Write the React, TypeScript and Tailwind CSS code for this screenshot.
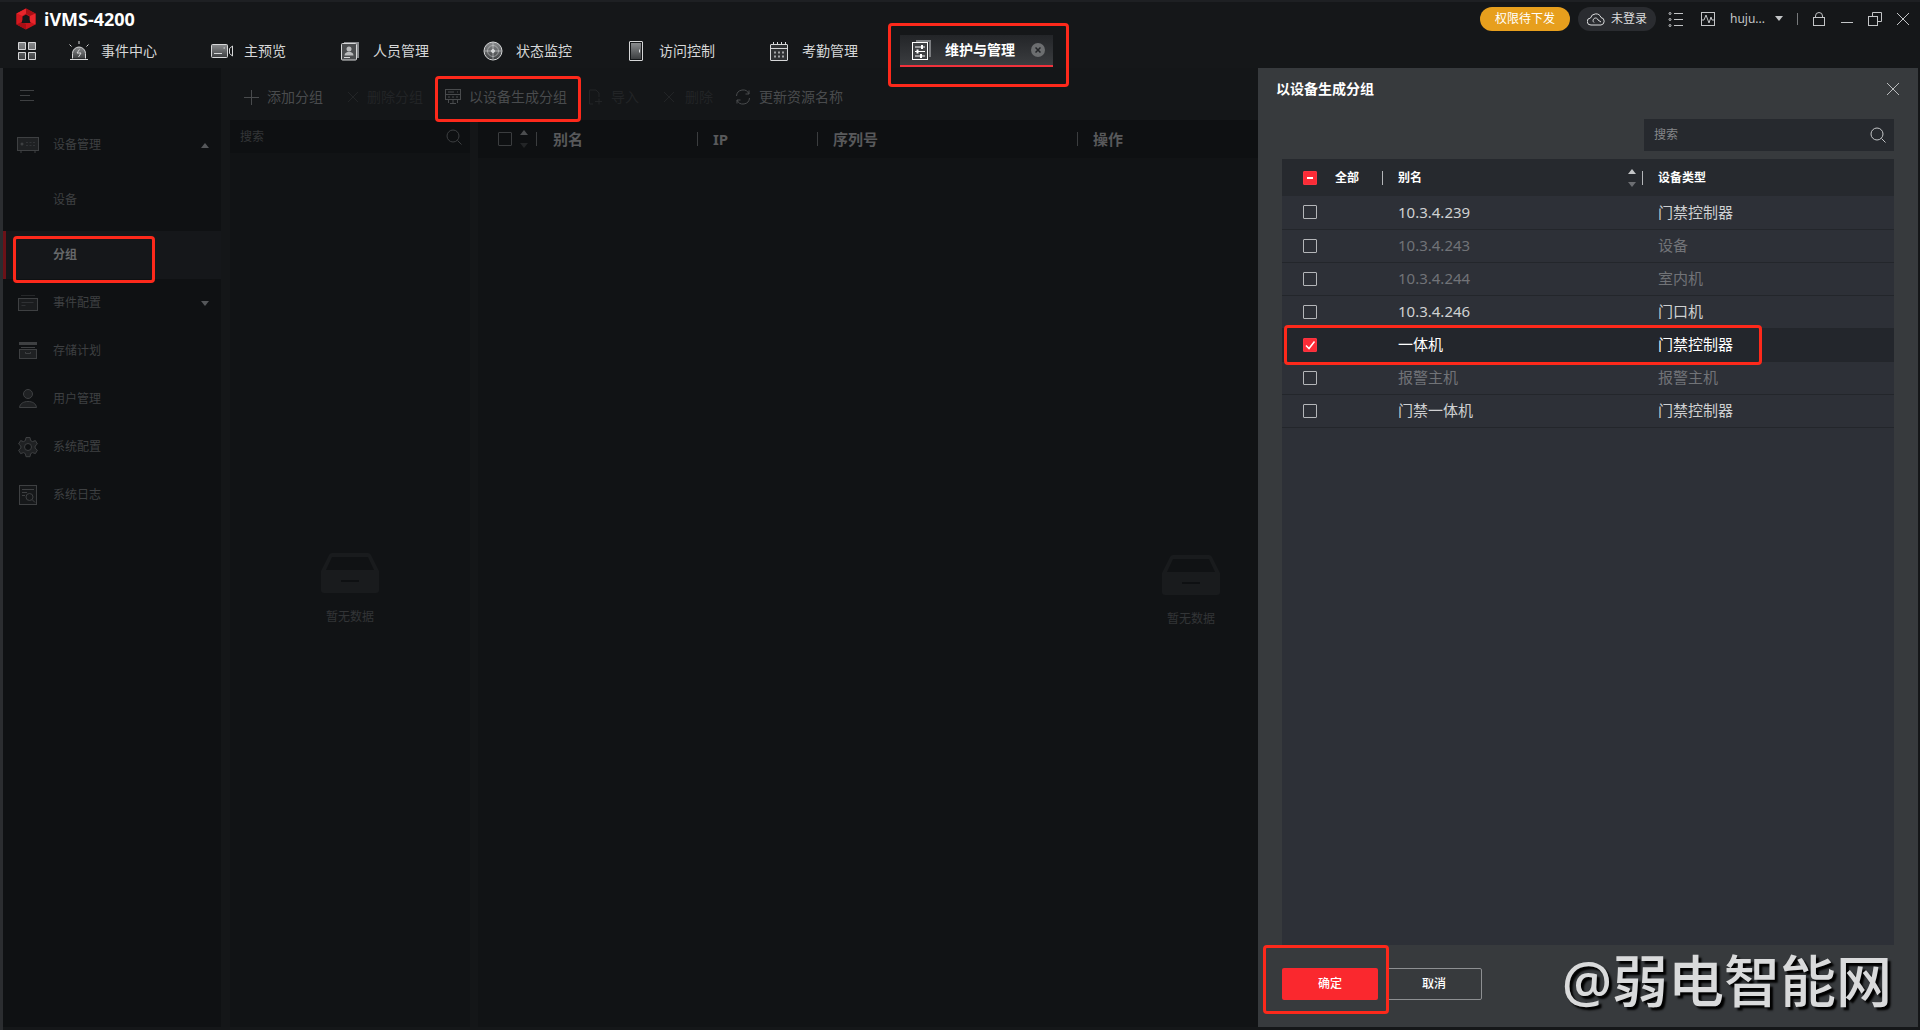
import { useState } from "react";
import type { ReactNode } from "react";
import clsx from "clsx";

type IconProps = { className?: string };

type Device = {
  name: string;
  type: string;
  disabled?: boolean;
};

const DEVICES: Device[] = [
  { name: "10.3.4.239", type: "门禁控制器" },
  { name: "10.3.4.243", type: "设备", disabled: true },
  { name: "10.3.4.244", type: "室内机", disabled: true },
  { name: "10.3.4.246", type: "门口机" },
  { name: "一体机", type: "门禁控制器" },
  { name: "报警主机", type: "报警主机", disabled: true },
  { name: "门禁一体机", type: "门禁控制器" },
];

// shared gradient for the filled parts of the tab icons
function IconDefs() {
  return (
    <svg className="absolute size-0" aria-hidden="true">
      <defs>
        <linearGradient id="metal" x1="0" y1="0" x2="0" y2="1">
          <stop offset="0" stopColor="#8a8c8e" />
          <stop offset="1" stopColor="#3c3e40" />
        </linearGradient>
      </defs>
    </svg>
  );
}

function Svg({ className, size = 20, children }: IconProps & { size?: number; children: ReactNode }) {
  return (
    <svg
      className={clsx("shrink-0", className)}
      width={size}
      height={size}
      viewBox={`0 0 ${size} ${size}`}
      fill="none"
      stroke="currentColor"
      aria-hidden="true"
    >
      {children}
    </svg>
  );
}

function Logo() {
  return (
    <svg width="20" height="22" viewBox="0 0 20 22" aria-hidden="true">
      <path d="M10 .5 19.5 5.5v11L10 21.500.5 16.500v-11z" fill="#c8141b" />
      <path d="M10 .5.5 5.500 6 8l4-2.500z" fill="#e8262c" />
      <path d="M10 .5 19.500 5.500 14 8l-4-2.500z" fill="#a80f15" />
      <path d="M.5 5.500v11L6 14V8z" fill="#d3181f" />
      <path d="M19.500 5.500v11L14 14V8z" fill="#e8262c" />
      <path d="M.5 16.500 10 21.500V16l-4-2z" fill="#a80f15" />
      <path d="M10 6.500 13.500 8.500v3l1 3.500h-9l1-3.500v-3z" fill="#151719" />
    </svg>
  );
}

const AlarmIcon = () => (
  <Svg size={22}>
    <path d="M4.500 18.500v-5a6.500 6.500 0 0 1 13 0v5" fill="url(#metal)" />
    <path d="M2 19.500h18M11 1v3M1.500 4.500l2 2M20.500 4.500l-2 2" />
    <path d="m11.500 9.500-2.500 3.500h4l-2.500 4" />
  </Svg>
);

const CameraIcon = () => (
  <Svg size={22}>
    <rect x=".5" y="4.500" width="16" height="13" rx="1" fill="url(#metal)" />
    <path d="M18.500 8.500v5l3 2.500V6z" />
    <path d="M3 13.500h8M12.500 8h1.500" />
  </Svg>
);

const PersonCardIcon = () => (
  <Svg>
    <path d="M4 1h15v16h-2V3H4z" fill="#85878a" stroke="none" />
    <rect x="1.500" y="2.500" width="15" height="16.500" rx="1" fill="#4b4d4f" />
    <circle cx="9" cy="8" r="2.500" fill="#b9babb" stroke="none" />
    <path d="M4.500 14.500c0-5 9-5 9 0z" fill="#b9babb" stroke="none" />
    <path d="M4 16.500h6" />
  </Svg>
);

const RadarIcon = () => (
  <Svg>
    <circle cx="10" cy="10" r="9" fill="url(#metal)" />
    <circle cx="10" cy="10" r="5.500" strokeOpacity=".5" />
    <circle cx="10" cy="10" r="1.500" fill="currentColor" />
    <path d="M10 2v16M2 10h16" strokeOpacity=".6" />
  </Svg>
);

const DoorIcon = () => (
  <Svg>
    <rect x="3.500" y=".5" width="13" height="19" rx=".5" />
    <rect x="5" y="2" width="10" height="16" fill="url(#metal)" stroke="none" />
    <path d="M13.500 8.500v3" />
  </Svg>
);

const CalendarIcon = () => (
  <Svg>
    <rect x="1.500" y="3.500" width="17" height="16" rx=".5" fill="#2f3133" />
    <path d="M1.500 7.500h17M4.500 1v3M8.500 1v3M12.500 1v3M16.500 1v3" />
    <path d="M5 11.500h11M5 15.500h11" strokeWidth="2" strokeDasharray="2 2" strokeOpacity=".7" />
  </Svg>
);

const SettingsIcon = () => (
  <Svg>
    <path d="M4 0h15v17h-2V2H4z" fill="#7b7d80" stroke="none" />
    <rect x=".5" y="2.500" width="15" height="17" fill="#3f4144" />
    <path d="M3 7h10M3 11.500h10M3 16h10" />
    <path d="M10 5v4M5.500 9.500v4M9 14v4" strokeWidth="2" />
  </Svg>
);

const TABS = [
  { label: "事件中心", icon: <AlarmIcon /> },
  { label: "主预览", icon: <CameraIcon /> },
  { label: "人员管理", icon: <PersonCardIcon /> },
  { label: "状态监控", icon: <RadarIcon /> },
  { label: "访问控制", icon: <DoorIcon /> },
  { label: "考勤管理", icon: <CalendarIcon /> },
];

const DeviceIcon = () => (
  <Svg size={22}>
    <rect x=".5" y="3.500" width="21" height="13" fill="#1f2123" />
    <circle cx="5" cy="10" r="1.500" fill="currentColor" stroke="none" />
    <path d="M9 8.500h9M9 11.500h9" strokeDasharray="2 1.500" strokeOpacity=".6" />
    <path d="M4 17v2M18 17v2" />
  </Svg>
);

const EventIcon = () => (
  <Svg size={22}>
    <path d="M4 3.500h14" strokeOpacity=".5" />
    <rect x="1.500" y="6.500" width="19" height="12" fill="#1a1c1e" />
    <path d="M4.500 10.500h12M4.500 13.500h4" strokeOpacity=".6" />
  </Svg>
);

const StorageIcon = () => (
  <Svg size={22}>
    <rect x="2" y="2" width="18" height="3" fill="currentColor" stroke="none" />
    <path d="M4 7.500h14" />
    <rect x="2.500" y="9.500" width="17" height="9" fill="#1f2123" />
    <path d="M8.500 12v1.500h5V12" />
  </Svg>
);

const UserIcon = () => (
  <Svg size={22}>
    <circle cx="11" cy="6" r="4.500" fill="#1f2123" />
    <path d="M2.500 19.500c.5-4 4-6 8.500-6s8 2 8.500 6z" fill="#1f2123" />
  </Svg>
);

const GearIcon = () => (
  <Svg size={22}>
    <path
      d="M9 1.500h4l.6 3 1.900 1.100 2.900-1 2 3.400-2.300 2v2.200l2.300 2-2 3.400-2.900-1-1.900 1.100-.6 3H9l-.6-3-1.900-1.100-2.900 1-2-3.400 2.300-2V10l-2.300-2 2-3.400 2.900 1 1.900-1.100z"
      fill="#1f2123"
    />
    <circle cx="11" cy="11" r="3.500" fill="#0f1113" />
  </Svg>
);

const LogIcon = () => (
  <Svg size={22}>
    <rect x="2.500" y="1.500" width="17" height="19" fill="#16181a" />
    <path d="M5 5.500h12M5 8.500h5M5 11.500h3" />
    <circle cx="12.500" cy="13" r="3.500" />
    <path d="m15 15.500 3 3" />
  </Svg>
);

const CloseIcon = ({ className }: IconProps) => (
  <Svg size={14} className={className}>
    <path d="m1 1 12 12M13 1 1 13" />
  </Svg>
);

const SearchIcon = ({ className }: IconProps) => (
  <Svg size={16} className={className}>
    <circle cx="7" cy="7" r="6" />
    <path d="m11.500 11.500 4 4" />
  </Svg>
);

const PlusIcon = () => (
  <Svg size={16}>
    <path d="M8.500 1v15M1 8.500h15" />
  </Svg>
);

const SmallCross = () => (
  <Svg size={12}>
    <path d="m1 1 10 10M11 1 1 11" />
  </Svg>
);

const ServerIcon = () => (
  <Svg size={16}>
    <rect x=".5" y=".5" width="15" height="5" />
    <rect x=".5" y="5.500" width="15" height="5" />
    <path d="M3 3h6M12 3h1M3 8h2M7 8h2M11 8h2M3.500 11v3M8 11v4M12.500 11v3M5 14.500h6" />
  </Svg>
);

const ImportIcon = () => (
  <Svg size={16}>
    <path d="M6 15H2.500V1H9l3 3v4" />
    <path d="M8 12.500h7M12 9.500v6" />
  </Svg>
);

const RefreshIcon = () => (
  <Svg size={16}>
    <path d="M1.500 7A6.500 6.500 0 0 1 14 5V1.500M14 5h-3.500M14.500 9A6.500 6.500 0 0 1 2 11v3.500M2 11h3.500" />
  </Svg>
);

function Caret({ up, className }: { up?: boolean; className?: string }) {
  return (
    <svg className={clsx("shrink-0", className)} width="8" height="5" viewBox="0 0 8 5" fill="currentColor" aria-hidden="true">
      <path d={up ? "M0 5 4 0l4 5z" : "M0 0h8L4 5z"} />
    </svg>
  );
}

function SortArrows({ upClass, downClass }: { upClass: string; downClass: string }) {
  return (
    <span className="flex flex-col gap-2">
      <Caret up className={upClass} />
      <Caret className={downClass} />
    </span>
  );
}

// red frame that points out a step
function Mark({ className }: IconProps) {
  return (
    <span
      className={clsx("pointer-events-none absolute z-20 rounded-[4px] border-3 border-[#fd291b]", className)}
      aria-hidden="true"
    />
  );
}

function Checkbox({
  label,
  checked,
  mixed,
  dim,
  onChange,
}: {
  label: string;
  checked: boolean;
  mixed?: boolean;
  dim?: boolean;
  onChange: () => void;
}) {
  const on = checked || mixed;
  return (
    <span className="grid size-3.5 shrink-0">
      <input
        type="checkbox"
        aria-label={label}
        checked={checked}
        onChange={onChange}
        className={clsx(
          "col-start-1 row-start-1 size-3.5 appearance-none rounded-[1px] border",
          dim && "border-[#3b3d3f]",
          !dim && !on && "border-[#b4b6b9]",
          !dim && on && "border-[#fa3440] bg-[#fa2c37]"
        )}
      />
      {on && (
        <svg className="pointer-events-none col-start-1 row-start-1" viewBox="0 0 14 14" fill="none" stroke="#fff" aria-hidden="true">
          <path d={mixed ? "M4 7h6" : "m3 7.500 3 3 5.500-7"} strokeWidth={mixed ? 2 : 1.5} />
        </svg>
      )}
    </span>
  );
}

function EmptyState({ className }: IconProps) {
  return (
    <div className={clsx("flex flex-col items-center gap-4 text-xs text-[#333537]", className)}>
      <svg width="58" height="40" viewBox="0 0 58 40" aria-hidden="true">
        <path d="M8 2q1-2 3-2h36q2 0 3 2l8 16v19q0 3-3 3H3q-3 0-3-3V18z" fill="#191b1d" />
        <path d="M11 4h36l6 13H5z" fill="#101214" />
        <path d="M20 28h18" stroke="#0e1012" strokeWidth="2" />
      </svg>
      <span>暂无数据</span>
    </div>
  );
}

function TopBar() {
  return (
    <header className="h-[68px] shrink-0 border-t-2 border-[#1e2023] bg-[#151719]">
      <div className="flex h-[33px] items-center justify-between pr-2.5 pl-4">
        <div className="flex items-center gap-2">
          <Logo />
          <h1 className="text-lg leading-6 font-bold text-white">iVMS-4200</h1>
        </div>
        <div className="flex items-center text-[#c3c5c7]">
          <button type="button" className="h-6 w-[90px] rounded-full bg-[#e79f1d] text-xs text-white">
            权限待下发
          </button>
          <button
            type="button"
            className="ml-2 flex h-6 w-[78px] items-center justify-center gap-1.5 rounded-full bg-[#2a2c30] text-xs text-[#dcddde]"
          >
            <svg width="18" height="14" viewBox="0 0 18 14" fill="none" stroke="currentColor" aria-hidden="true">
              <path d="M4 13a3.500 3.500 0 0 1-.5-7A5.500 5.500 0 0 1 14 5.500 3.800 3.800 0 0 1 14 13z" />
              <path d="M7 10.500A2.500 2.500 0 1 1 11 8l3 2" />
            </svg>
            未登录
          </button>
          <button type="button" aria-label="任务列表" className="ml-3">
            <Svg size={16}>
              <path d="M6 2.500h9M6 8.500h9M6 14.500h9" />
              <circle cx="2" cy="2.500" r="1" />
              <circle cx="2" cy="8.500" r="1" />
              <circle cx="2" cy="14.500" r="1" />
            </Svg>
          </button>
          <button type="button" aria-label="性能" className="ml-4">
            <Svg size={16}>
              <rect x="1.500" y="1.500" width="13" height="13" />
              <path d="M2 9h2l2-5 3 8 2-6 1 3h2" />
            </Svg>
          </button>
          <button type="button" className="ml-3.5 flex items-center gap-2.5 text-xs">
            huju...
            <Caret />
          </button>
          <span className="ml-3.5 h-3 w-px bg-[#77797b]" />
          <button type="button" aria-label="锁定" className="ml-3.5">
            <Svg size={14}>
              <rect x="1.500" y="5.500" width="11" height="8" />
              <path d="M3.500 5.500V4a3.500 3.500 0 0 1 7 0v1.500" />
            </Svg>
          </button>
          <button type="button" aria-label="最小化" className="ml-3.5">
            <Svg size={14}>
              <path d="M1 10.500h12" />
            </Svg>
          </button>
          <button type="button" aria-label="还原" className="ml-3.5">
            <Svg size={14}>
              <rect x=".5" y="4.500" width="9" height="9" />
              <path d="M4.500 4.500v-4h9v9h-4" />
            </Svg>
          </button>
          <button type="button" aria-label="关闭" className="ml-3.5">
            <CloseIcon />
          </button>
        </div>
      </div>

      <nav className="flex pl-[18px] text-sm text-[#d6d7d8]">
        <button type="button" aria-label="全部功能" className="mr-5 h-8">
          <Svg size={18}>
            <path d="M.5.500h7v7h-7zM10.500.500h7v7h-7zM.5 10.500h7v7h-7zM10.500 10.500h7v7h-7z" fill="url(#metal)" />
          </Svg>
        </button>
        {TABS.map((tab) => (
          <button key={tab.label} type="button" className="mr-[42px] flex h-8 items-center whitespace-nowrap">
            <span className="ml-3 flex w-[33px] items-center">{tab.icon}</span>
            {tab.label}
          </button>
        ))}
        <div className="relative flex h-8 w-[153px] items-center border-b-2 border-[#f0323c] bg-linear-to-b from-[#232528] to-[#3b3d40] pl-3 font-bold text-white">
          <span className="w-[33px]">
            <SettingsIcon />
          </span>
          维护与管理
          <button type="button" aria-label="关闭标签" className="ml-4 grid size-3.5 place-items-center rounded-full bg-[#6c6e70] text-[#232528]">
            <svg width="6" height="6" viewBox="0 0 6 6" stroke="currentColor" strokeWidth="1.500" aria-hidden="true">
              <path d="m.5.500 5 5M5.500.500l-5 5" />
            </svg>
          </button>
          <Mark className="-top-3 -left-3 h-16 w-[181px]" />
        </div>
      </nav>
    </header>
  );
}

function SideItem({ icon, label, caret }: { icon: ReactNode; label: string; caret?: "up" | "down" }) {
  return (
    <li>
      <button type="button" className="flex h-12 w-full items-center pr-3 pl-3.5 text-left">
        <span className="w-9">{icon}</span>
        <span className="flex-1">{label}</span>
        {caret && <Caret up={caret === "up"} className="text-[#55575a]" />}
      </button>
    </li>
  );
}

function Sidebar() {
  return (
    <aside className="w-[218px] shrink-0 bg-[#0f1113] text-xs text-[#3e4042]">
      <button type="button" aria-label="收起菜单" className="flex h-[53px] w-full items-center pl-4">
        <Svg size={16}>
          <path d="M1 3.500h14M1 8.500h10M1 13.500h14" />
        </Svg>
      </button>
      <ul>
        <SideItem icon={<DeviceIcon />} label="设备管理" caret="up" />
        <li>
          <button type="button" className="h-[62px] w-full pl-[50px] text-left">
            设备
          </button>
        </li>
        <li className="relative border-l-3 border-[#6b1218] bg-[#15171a]">
          <button type="button" className="h-12 w-full pl-[47px] text-left font-bold text-[#66686a]">
            分组
          </button>
          <Mark className="top-[5px] left-[7px] h-[47px] w-[142px]" />
        </li>
        <SideItem icon={<EventIcon />} label="事件配置" caret="down" />
        <SideItem icon={<StorageIcon />} label="存储计划" />
        <SideItem icon={<UserIcon />} label="用户管理" />
        <SideItem icon={<GearIcon />} label="系统配置" />
        <SideItem icon={<LogIcon />} label="系统日志" />
      </ul>
    </aside>
  );
}

function Toolbar() {
  return (
    <div className="flex h-[52px] items-center pt-1.5 pl-[13px] text-sm whitespace-nowrap text-[#494b4d]">
      <button type="button" className="flex items-center gap-2">
        <PlusIcon />
        添加分组
      </button>
      <button type="button" className="ml-6 flex items-center gap-2 text-[#222426]">
        <SmallCross />
        删除分组
      </button>
      <button type="button" className="relative ml-[22px] flex items-center gap-2">
        <ServerIcon />
        以设备生成分组
        <Mark className="-top-[11px] -left-2.5 h-[46px] w-[146px]" />
      </button>
      <button type="button" className="ml-5 flex items-center gap-2 text-[#222426]">
        <ImportIcon />
        导入
      </button>
      <button type="button" className="ml-6 flex items-center gap-2.5 text-[#222426]">
        <SmallCross />
        删除
      </button>
      <button type="button" className="ml-[22px] flex items-center gap-2">
        <RefreshIcon />
        更新资源名称
      </button>
    </div>
  );
}

function GroupPage() {
  const [all, setAll] = useState(false);

  return (
    <main className="flex min-w-0 flex-1 flex-col bg-[#141618] pr-4 pl-[9px]">
      <Toolbar />
      <div className="flex flex-1 gap-2">
        <section className="w-60 shrink-0 bg-[#111315]">
          <div className="flex h-[33px] items-center bg-[#0e1012] pr-2 pl-2.5 text-[#3d3f41]">
            <input
              type="text"
              aria-label="搜索分组"
              placeholder="搜索"
              className="min-w-0 flex-1 text-xs outline-none placeholder:text-[#343638]"
            />
            <SearchIcon />
          </div>
          <EmptyState className="mt-[400px]" />
        </section>

        <section className="min-w-0 flex-1 bg-[#111315]">
          <table className="w-full table-fixed text-left text-[15px] text-[#58595b]">
            <colgroup>
              <col className="w-[60px]" />
              <col className="w-40" />
              <col className="w-[120px]" />
              <col className="w-[260px]" />
              <col />
            </colgroup>
            <thead>
              <tr className="h-[38px] bg-[#0e1012]">
                <th>
                  <span className="flex items-center gap-2 pl-5">
                    <Checkbox dim label="全选" checked={all} onChange={() => setAll(!all)} />
                    <SortArrows upClass="text-[#4b4d4f]" downClass="text-[#232527]" />
                    <span className="h-3.5 w-px bg-[#3b3d3f]" />
                  </span>
                </th>
                <th>
                  <span className="flex items-center justify-between pl-[15px]">
                    别名
                    <span className="h-3.5 w-px bg-[#3b3d3f]" />
                  </span>
                </th>
                <th>
                  <span className="flex items-center justify-between pl-[15px]">
                    IP
                    <span className="h-3.5 w-px bg-[#3b3d3f]" />
                  </span>
                </th>
                <th>
                  <span className="flex items-center justify-between pl-[15px]">
                    序列号
                    <span className="h-3.5 w-px bg-[#3b3d3f]" />
                  </span>
                </th>
                <th>
                  <span className="pl-[15px]">操作</span>
                </th>
              </tr>
            </thead>
          </table>
          <EmptyState className="mt-[397px]" />
        </section>
      </div>
    </main>
  );
}

function DeviceDialog() {
  const [selected, setSelected] = useState<string[]>(["一体机"]);

  const toggle = (name: string) =>
    setSelected((prev) => (prev.includes(name) ? prev.filter((n) => n !== name) : [...prev, name]));

  const allChecked = selected.length === DEVICES.length;

  return (
    <div
      role="dialog"
      aria-labelledby="dialog-title"
      className="absolute top-[68px] right-0.5 bottom-[3px] z-10 flex w-[660px] flex-col bg-[#373a3d] pr-6 pl-6"
    >
      <div className="flex h-[51px] items-center justify-between pb-2.5 text-[#b9bbbd]">
        <h2 id="dialog-title" className="-ml-1.5 text-sm font-bold text-white">
          以设备生成分组
        </h2>
        <button type="button" aria-label="关闭" className="-mr-1.5">
          <CloseIcon />
        </button>
      </div>

      <div className="flex h-8 w-[250px] items-center self-end bg-[#26292e] pr-2 pl-2.5 text-[#c3c5c7]">
        <input
          type="text"
          aria-label="搜索设备"
          placeholder="搜索"
          className="min-w-0 flex-1 text-xs outline-none placeholder:text-[#85878a]"
        />
        <SearchIcon />
      </div>

      <div className="mt-2 flex-1 bg-[#2d3037]">
        <table className="w-full table-fixed text-left">
          <colgroup>
            <col className="w-[101px]" />
            <col className="w-[260px]" />
            <col />
          </colgroup>
          <thead>
            <tr className="h-[37px] bg-[#26292e] text-xs text-white">
              <th>
                <span className="flex items-center pl-[21px]">
                  <Checkbox
                    label="全部"
                    checked={allChecked}
                    mixed={selected.length > 0 && !allChecked}
                    onChange={() => setSelected(allChecked ? [] : DEVICES.map((d) => d.name))}
                  />
                  <span className="flex-1 pl-[18px]">全部</span>
                  <span className="h-3.5 w-px bg-[#b4b6b9]" />
                </span>
              </th>
              <th>
                <span className="flex items-center pl-[15px]">
                  <span className="flex-1">别名</span>
                  <SortArrows upClass="text-[#c3c5c7]" downClass="text-[#6c6e72]" />
                  <span className="ml-1.5 h-3.5 w-px bg-[#b4b6b9]" />
                </span>
              </th>
              <th>
                <span className="pl-[15px]">设备类型</span>
              </th>
            </tr>
          </thead>
          <tbody className="text-[15px]">
            {DEVICES.map((device) => {
              const checked = selected.includes(device.name);
              return (
                <tr
                  key={device.name}
                  className={clsx(
                    "h-[33px] border-b border-[#23262b]",
                    checked && "bg-[#23262c] text-white",
                    !checked && (device.disabled ? "text-[#717377]" : "text-[#cfd0d2]")
                  )}
                >
                  <td className="relative pl-[21px]">
                    <Checkbox label={device.name} checked={checked} onChange={() => toggle(device.name)} />
                    {device.name === "一体机" && <Mark className="-top-1 left-0.5 h-10 w-[478px]" />}
                  </td>
                  <td className="pl-[15px]">{device.name}</td>
                  <td className="pl-[15px]">{device.type}</td>
                </tr>
              );
            })}
          </tbody>
        </table>
      </div>

      <div className="flex h-[82px] items-center gap-2 pt-3 pb-4 text-xs font-medium text-white">
        <button type="button" className="relative h-8 w-24 rounded-[2px] bg-[#fa282e]">
          确定
          <Mark className="-top-[23px] -left-[19px] h-[69px] w-[126px]" />
        </button>
        <button type="button" className="h-8 w-24 rounded-[2px] border border-[#8d8f92]">
          取消
        </button>
      </div>
    </div>
  );
}

export default function App() {
  return (
    <div className="relative flex min-h-screen flex-col overflow-hidden bg-[#151719] font-['Noto_Sans','Noto_Sans_CJK_SC',sans-serif]">
      <IconDefs />
      <TopBar />
      <div className="flex flex-1 border-l-3 border-[#2b2d30] pb-[3px]">
        <Sidebar />
        <GroupPage />
      </div>
      <DeviceDialog />
      <p className="pointer-events-none absolute right-7 bottom-3.5 z-30 text-[56px] leading-[72px] font-medium text-[#d9dadb] [text-shadow:3px_3px_2px_#000]">
        @弱电智能网
      </p>
    </div>
  );
}
